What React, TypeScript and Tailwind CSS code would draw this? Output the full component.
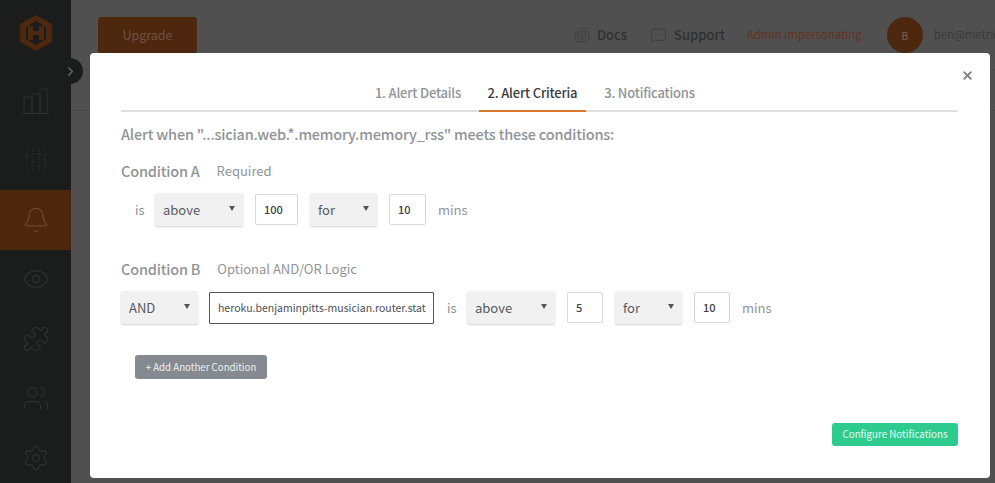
import { Bell, ChevronRight, Eye, Puzzle, Settings, Users, X, Newspaper, MessageSquareMore } from "lucide-react";

const font = "font-['Noto_Sans_CJK_SC',sans-serif]";

function Logo() {
  return (
    <svg width="34" height="36" viewBox="0 0 34 36">
      <path d="M17 0 L33 9 V27 L17 36 L1 27 V9 Z" fill="#4e270f" />
      <path d="M17 6 L27 12 V24 L17 30 L7 24 V12 Z" fill="#1b1c1c" />
      <path d="M9 11 H14 V16 H20 V11 H25 V25 H20 V20 H14 V25 H9 Z" fill="#4e270f" />
    </svg>
  );
}

function StepBars() {
  return (
    <svg width="26" height="26" viewBox="0 0 26 26" fill="none" stroke="currentColor" strokeWidth="1">
      <path d="M1 25 V9 H9 V25 M9 25 V6 H17 V25 M17 25 V1 H24 V25 M0 25.5 H26" />
    </svg>
  );
}

function TickColumns() {
  return (
    <svg width="24" height="26" viewBox="0 0 24 26" fill="none" stroke="currentColor" strokeWidth="1.2" strokeDasharray="1.4 1.4">
      <path d="M3 1 V25 M9 1 V25 M15 1 V25 M21 1 V25" />
      <path d="M1 9 H5 M7 15 H11 M13 7 H17 M19 13 H23" strokeDasharray="none" />
    </svg>
  );
}

function Select({ label, width }: { label: string; width: string }) {
  return (
    <div className={`flex h-[33px] ${width} items-center justify-between rounded-[2px] bg-[#f1f1f1] pl-2 pr-[8px] text-[13px] text-[#555a5d] shadow-[0_1px_2px_rgba(0,0,0,0.18)]`}>
      <span>{label}</span>
      <span className="mb-[3px] h-0 w-0 border-x-[3.5px] border-t-[5px] border-x-transparent border-t-[#555]" />
    </div>
  );
}

function NumberBox({ value, width }: { value: string; width: string }) {
  return (
    <div className={`flex h-[31px] ${width} items-center rounded-[2px] border border-[#d8d8d8] bg-white pl-2 text-[11px] font-medium text-[#3c4043]`}>
      {value}
    </div>
  );
}

function SideItem({ children, active }: { children: React.ReactNode; active?: boolean }) {
  return (
    <div className={`flex h-[59.5px] shrink-0 items-center justify-center ${active ? "bg-[#4e270f] text-[#6a472f]" : "text-[#2e2f2f]"}`}>
      {children}
    </div>
  );
}

export default function App() {
  return (
    <div className={`relative flex h-[483px] w-[995px] overflow-hidden bg-[#505050] ${font}`}>
      <aside className="flex w-[71px] shrink-0 flex-col bg-[#1b1c1c]">
        <div className="flex h-[71px] shrink-0 items-center justify-center pb-[5px]">
          <Logo />
        </div>
        <SideItem>
          <StepBars />
        </SideItem>
        <SideItem>
          <TickColumns />
        </SideItem>
        <SideItem active>
          <Bell size={28} strokeWidth={1.1} />
        </SideItem>
        <SideItem>
          <Eye size={28} strokeWidth={1.1} />
        </SideItem>
        <SideItem>
          <Puzzle size={28} strokeWidth={1.1} />
        </SideItem>
        <SideItem>
          <Users size={28} strokeWidth={1.1} />
        </SideItem>
        <SideItem>
          <Settings size={28} strokeWidth={1.1} />
        </SideItem>
      </aside>

      <main className="flex-1">
        <header className="flex h-[70px] items-start border-b border-[#484848] pl-[27px] pt-[17px]">
          <button className="flex h-[36px] w-[99px] items-center justify-center rounded-[3px] bg-[#4e270f] text-[12.5px] text-[#6f5244]">
            Upgrade
          </button>
          <div className="ml-[377px] flex h-[36px] items-center whitespace-nowrap">
            <Newspaper size={16} strokeWidth={1} className="text-[#3a3a3a]" />
            <span className="ml-[7px] text-[13px] font-medium text-[#2f3030]">Docs</span>
            <MessageSquareMore size={17} strokeWidth={1} className="ml-[23px] text-[#3a3a3a]" />
            <span className="ml-[7px] text-[13px] font-medium text-[#2f3030]">Support</span>
            <span className="ml-[22px] text-[11.4px] text-[#633022]">Admin impersonating</span>
            <div className="ml-[25px] flex h-[36px] w-[36px] shrink-0 items-center justify-center rounded-full bg-[#4e270f] text-[10px] text-[#80624e]">
              B
            </div>
            <span className="ml-[11px] text-[11.4px] text-[#3a3a3a]">ben@metrics</span>
          </div>
        </header>
        <div className="h-[41px] border-b border-[#484848]" />
      </main>

      <div className="absolute left-[57px] top-[58px] flex h-[26px] w-[26px] items-center justify-center rounded-full bg-[#1b1c1c] text-[#6b6b6b]">
        <ChevronRight size={15} strokeWidth={2} />
      </div>

      <div className="absolute left-[90px] top-[53px] flex h-[425px] w-[900px] flex-col rounded-[4px] bg-white pl-[31px] pr-[32px] text-[#8f9497]">
        <X size={13} strokeWidth={3.4} className="absolute right-[16px] top-[16px] text-[#7f8488]" />

        <div className="flex h-[59px] items-end justify-center border-b-2 border-[#e0e0e0] pr-[9px] text-[13px] font-medium tracking-[-0.2px]">
          <div className="flex h-[40px] gap-[9px]">
            <div className="-mb-[2px] flex w-[104px] items-center justify-center pt-[4px]">1. Alert Details</div>
            <div className="-mb-[2px] flex w-[107px] items-center justify-center border-b-2 border-[#d9772b] pt-[6px] text-[#3a3d40]">2. Alert Criteria</div>
            <div className="-mb-[2px] flex w-[109px] items-center justify-center pt-[4px]">3. Notifications</div>
          </div>
        </div>

        <h2 className="mt-[10px] text-[14.5px] leading-[24px] font-medium tracking-[-0.2px]">Alert when "...sician.web.*.memory.memory_rss" meets these conditions:</h2>

        <div className="mt-[13px] flex h-[24px] items-center">
          <span className="text-[14.5px] font-medium tracking-[-0.2px]">Condition A</span>
          <span className="ml-[17px] text-[13px]">Required</span>
        </div>

        <div className="mt-[10px] flex h-[33px] items-center pl-[14px] text-[13px]">
          <span className="w-[20px]">is</span>
          <Select label="above" width="w-[88px]" />
          <div className="ml-[12px]"><NumberBox value="100" width="w-[43px]" /></div>
          <div className="ml-[12px]"><Select label="for" width="w-[67px]" /></div>
          <div className="ml-[12px]"><NumberBox value="10" width="w-[37px]" /></div>
          <span className="ml-[12px]">mins</span>
        </div>

        <div className="mt-[31px] flex h-[24px] items-center">
          <span className="text-[14.5px] font-medium tracking-[-0.2px]">Condition B</span>
          <span className="ml-[17px] text-[13px]">Optional AND/OR Logic</span>
        </div>

        <div className="mt-[10px] flex h-[33px] items-center text-[13px]">
          <Select label="AND" width="w-[77px]" />
          <div className="ml-[11px] flex h-[32px] w-[225px] items-center whitespace-nowrap rounded-[1px] border border-[#55585b] bg-white pl-2 text-[10.5px] text-[#4c5053]">
            heroku.benjaminpitts-musician.router.stat
          </div>
          <span className="ml-[13px] w-[20px]">is</span>
          <Select label="above" width="w-[88px]" />
          <div className="ml-[12px]"><NumberBox value="5" width="w-[36px]" /></div>
          <div className="ml-[12px]"><Select label="for" width="w-[67px]" /></div>
          <div className="ml-[12px]"><NumberBox value="10" width="w-[36px]" /></div>
          <span className="ml-[12px]">mins</span>
        </div>

        <button className="ml-[14px] mt-[31px] h-[24px] w-[132px] rounded-[3px] bg-[#848a90] text-[9.7px] text-[#eef0f1]">
          + Add Another Condition
        </button>

        <button className="ml-auto mt-[44px] h-[23px] w-[126px] rounded-[3px] bg-[#2ecb8e] text-[9.8px] text-[#e8fbf3]">
          Configure Notifications
        </button>
      </div>
    </div>
  );
}
